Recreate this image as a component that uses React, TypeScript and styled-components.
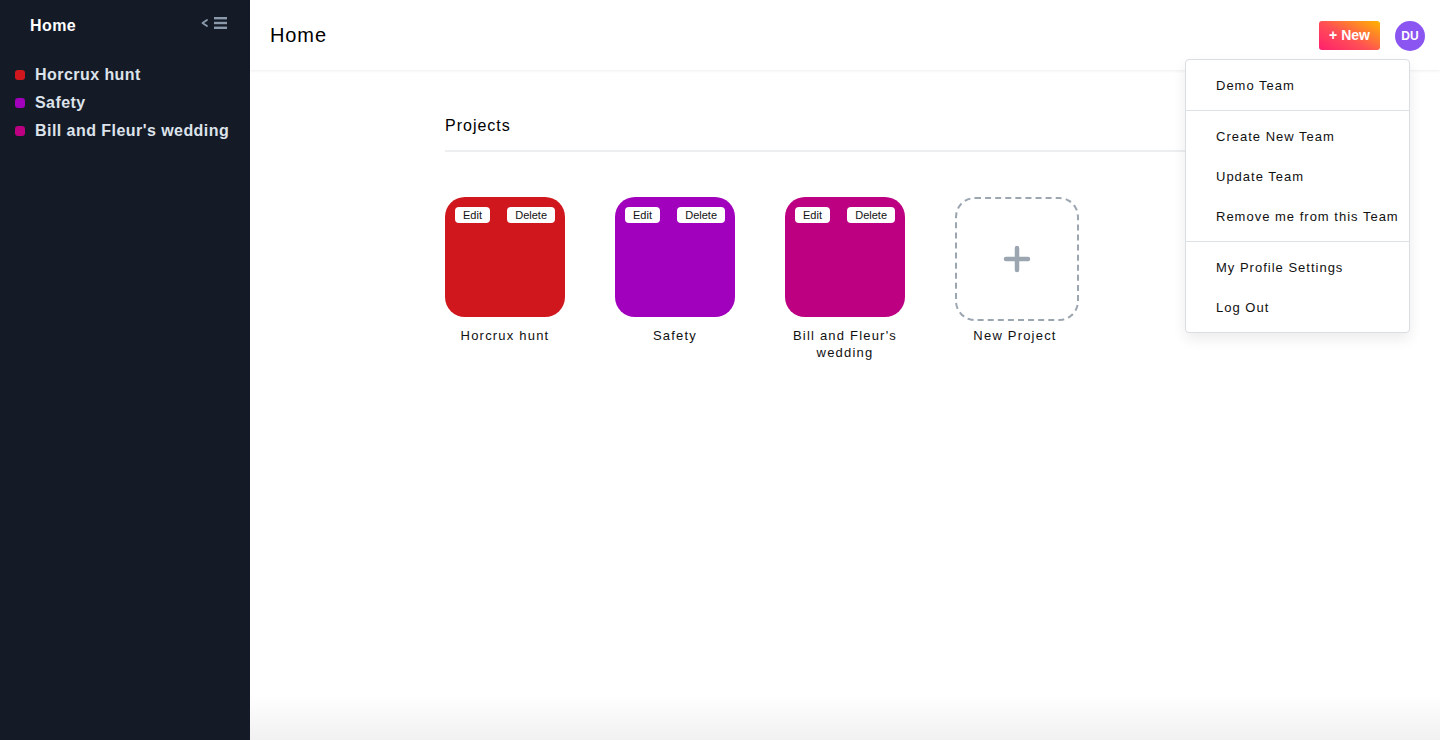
import styled, { createGlobalStyle } from "styled-components";

const GlobalStyle = createGlobalStyle`
  * {
    box-sizing: border-box;
  }
  html,
  body {
    margin: 0;
    padding: 0;
    font-family: "Liberation Sans", Arial, Helvetica, sans-serif;
    color: #111;
  }
`;

const Layout = styled.div`
  display: flex;
  width: 100%;
  height: 100vh;
  overflow: hidden;
`;

const Sidebar = styled.aside`
  width: 250px;
  flex-shrink: 0;
  background-color: #151a27;
  display: flex;
  flex-direction: column;
`;

const SidebarHeader = styled.div`
  height: 51px;
  padding: 1px 22px 0 30px;
  display: flex;
  align-items: center;
  justify-content: space-between;
`;

const SidebarTitle = styled.span`
  color: #ffffff;
  font-size: 16px;
  font-weight: 700;
  letter-spacing: 0.4px;
`;

const ToggleButton = styled.button`
  display: flex;
  align-items: center;
  padding: 0;
  border: none;
  background: none;
  cursor: pointer;
  margin-top: -6px;
`;

const ProjectList = styled.ul`
  list-style: none;
  margin: 10px 0 0;
  padding: 0 15px;
`;

const ProjectItem = styled.li`
  height: 28px;
  display: flex;
  align-items: center;
  gap: 10px;
  color: #dde3ea;
  font-size: 16px;
  font-weight: 700;
  letter-spacing: 0.45px;
  cursor: pointer;
`;

const Dot = styled.span<{ $color: string }>`
  width: 10px;
  height: 10px;
  border-radius: 3px;
  background-color: ${(p) => p.$color};
`;

const Main = styled.main`
  flex: 1;
  position: relative;
  display: flex;
  flex-direction: column;
  background: linear-gradient(
    to bottom,
    #ffffff 0,
    #ffffff calc(100% - 45px),
    #f1f1f1 100%
  );
`;

const Header = styled.header`
  height: 70px;
  flex-shrink: 0;
  display: flex;
  align-items: center;
  justify-content: space-between;
  padding: 0 15px 0 20px;
  background-color: #ffffff;
  box-shadow: 0 1px 3px rgba(0, 0, 0, 0.07);
  position: relative;
  z-index: 1;
`;

const PageTitle = styled.h1`
  margin: 0;
  font-size: 20px;
  font-weight: 400;
  letter-spacing: 0.9px;
  color: #000;
`;

const HeaderActions = styled.div`
  display: flex;
  align-items: center;
  gap: 15px;
`;

const NewButton = styled.button`
  height: 29px;
  width: 61px;
  padding: 0;
  border: none;
  border-radius: 3px;
  background: linear-gradient(30deg, #ff1f6e 0%, #ff4f55 45%, #ffb500 100%);
  color: #ffffff;
  font-family: inherit;
  font-size: 14px;
  font-weight: 700;
  cursor: pointer;
`;

const Avatar = styled.div`
  width: 30px;
  height: 30px;
  border-radius: 50%;
  background-color: #8b55f2;
  color: #ffffff;
  font-size: 12px;
  font-weight: 700;
  display: flex;
  align-items: center;
  justify-content: center;
  margin-top: 2px;
`;

const Content = styled.section`
  width: 800px;
  margin: 0 auto;
  padding-top: 47px;
`;

const SectionTitle = styled.h2`
  margin: 0;
  padding-bottom: 15px;
  border-bottom: 2px solid #eceeef;
  font-size: 16px;
  font-weight: 400;
  letter-spacing: 1px;
  color: #000;
`;

const Grid = styled.div`
  display: flex;
  gap: 50px;
  margin-top: 45px;
`;

const ProjectCard = styled.div`
  width: 120px;
  display: flex;
  flex-direction: column;
  align-items: center;
`;

const Tile = styled.div<{ $color: string }>`
  width: 120px;
  height: 120px;
  border-radius: 20px;
  background-color: ${(p) => p.$color};
  padding: 10px;
  display: flex;
  align-items: flex-start;
  justify-content: space-between;
`;

const TileButton = styled.button`
  height: 16px;
  padding: 0 8px;
  border: none;
  border-radius: 4px;
  background-color: #ffffff;
  color: #111;
  font-family: inherit;
  font-size: 11px;
  line-height: 16px;
  cursor: pointer;
`;

const AddTile = styled.div`
  width: 124px;
  height: 124px;
  margin: 0 -4px -4px 0;
  align-self: flex-start;
  border: 2px dashed #9ca6b1;
  border-radius: 20px;
  display: flex;
  align-items: center;
  justify-content: center;
  cursor: pointer;
`;

const CardLabel = styled.div`
  margin-top: 10px;
  width: 130px;
  text-align: center;
  font-size: 13px;
  line-height: 17px;
  letter-spacing: 1.2px;
  color: #111;
`;

const Dropdown = styled.div`
  position: absolute;
  top: 59px;
  right: 30px;
  width: 225px;
  padding: 5px 0;
  background-color: #ffffff;
  border: 1px solid #d9dee3;
  border-radius: 4px;
  box-shadow: 0 6px 14px rgba(0, 0, 0, 0.08);
  z-index: 2;
`;

const DropdownItem = styled.div`
  height: 40px;
  display: flex;
  align-items: center;
  padding-left: 30px;
  font-size: 13px;
  letter-spacing: 1px;
  color: #111;
  white-space: nowrap;
  cursor: pointer;
`;

const DropdownDivider = styled.div`
  height: 1px;
  margin: 5px 0;
  background-color: #dde2e6;
`;

const projects = [
  { name: "Horcrux hunt", color: "#d0171d" },
  { name: "Safety", color: "#a100bc" },
  { name: "Bill and Fleur's wedding", color: "#bd0081" },
];

const SidebarToggleIcon = () => (
  <svg width="28" height="14" viewBox="0 0 28 14" fill="none">
    <path
      d="M7 4 L2.5 7 L7 10"
      stroke="#8b9aaa"
      strokeWidth="1.8"
      strokeLinecap="round"
      strokeLinejoin="round"
    />
    <rect x="14" y="1" width="13" height="2.4" fill="#8b9aaa" />
    <rect x="14" y="5.8" width="13" height="2.4" fill="#8b9aaa" />
    <rect x="14" y="10.6" width="13" height="2.4" fill="#8b9aaa" />
  </svg>
);

const PlusIcon = () => (
  <svg width="28" height="28" viewBox="0 0 28 28">
    <path
      d="M14 3 V25 M3 14 H25"
      stroke="#9ca6b1"
      strokeWidth="4.5"
      strokeLinecap="round"
    />
  </svg>
);

export default function App() {
  return (
    <>
      <GlobalStyle />
      <Layout>
        <Sidebar>
          <SidebarHeader>
            <SidebarTitle>Home</SidebarTitle>
            <ToggleButton aria-label="Collapse sidebar">
              <SidebarToggleIcon />
            </ToggleButton>
          </SidebarHeader>
          <ProjectList>
            {projects.map((p) => (
              <ProjectItem key={p.name}>
                <Dot $color={p.color} />
                {p.name}
              </ProjectItem>
            ))}
          </ProjectList>
        </Sidebar>

        <Main>
          <Header>
            <PageTitle>Home</PageTitle>
            <HeaderActions>
              <NewButton>+ New</NewButton>
              <Avatar>DU</Avatar>
            </HeaderActions>
          </Header>

          <Content>
            <SectionTitle>Projects</SectionTitle>
            <Grid>
              {projects.map((p) => (
                <ProjectCard key={p.name}>
                  <Tile $color={p.color}>
                    <TileButton>Edit</TileButton>
                    <TileButton>Delete</TileButton>
                  </Tile>
                  <CardLabel>{p.name}</CardLabel>
                </ProjectCard>
              ))}
              <ProjectCard>
                <AddTile>
                  <PlusIcon />
                </AddTile>
                <CardLabel>New Project</CardLabel>
              </ProjectCard>
            </Grid>
          </Content>

          <Dropdown>
            <DropdownItem>Demo Team</DropdownItem>
            <DropdownDivider />
            <DropdownItem>Create New Team</DropdownItem>
            <DropdownItem>Update Team</DropdownItem>
            <DropdownItem>Remove me from this Team</DropdownItem>
            <DropdownDivider />
            <DropdownItem>My Profile Settings</DropdownItem>
            <DropdownItem>Log Out</DropdownItem>
          </Dropdown>
        </Main>
      </Layout>
    </>
  );
}
